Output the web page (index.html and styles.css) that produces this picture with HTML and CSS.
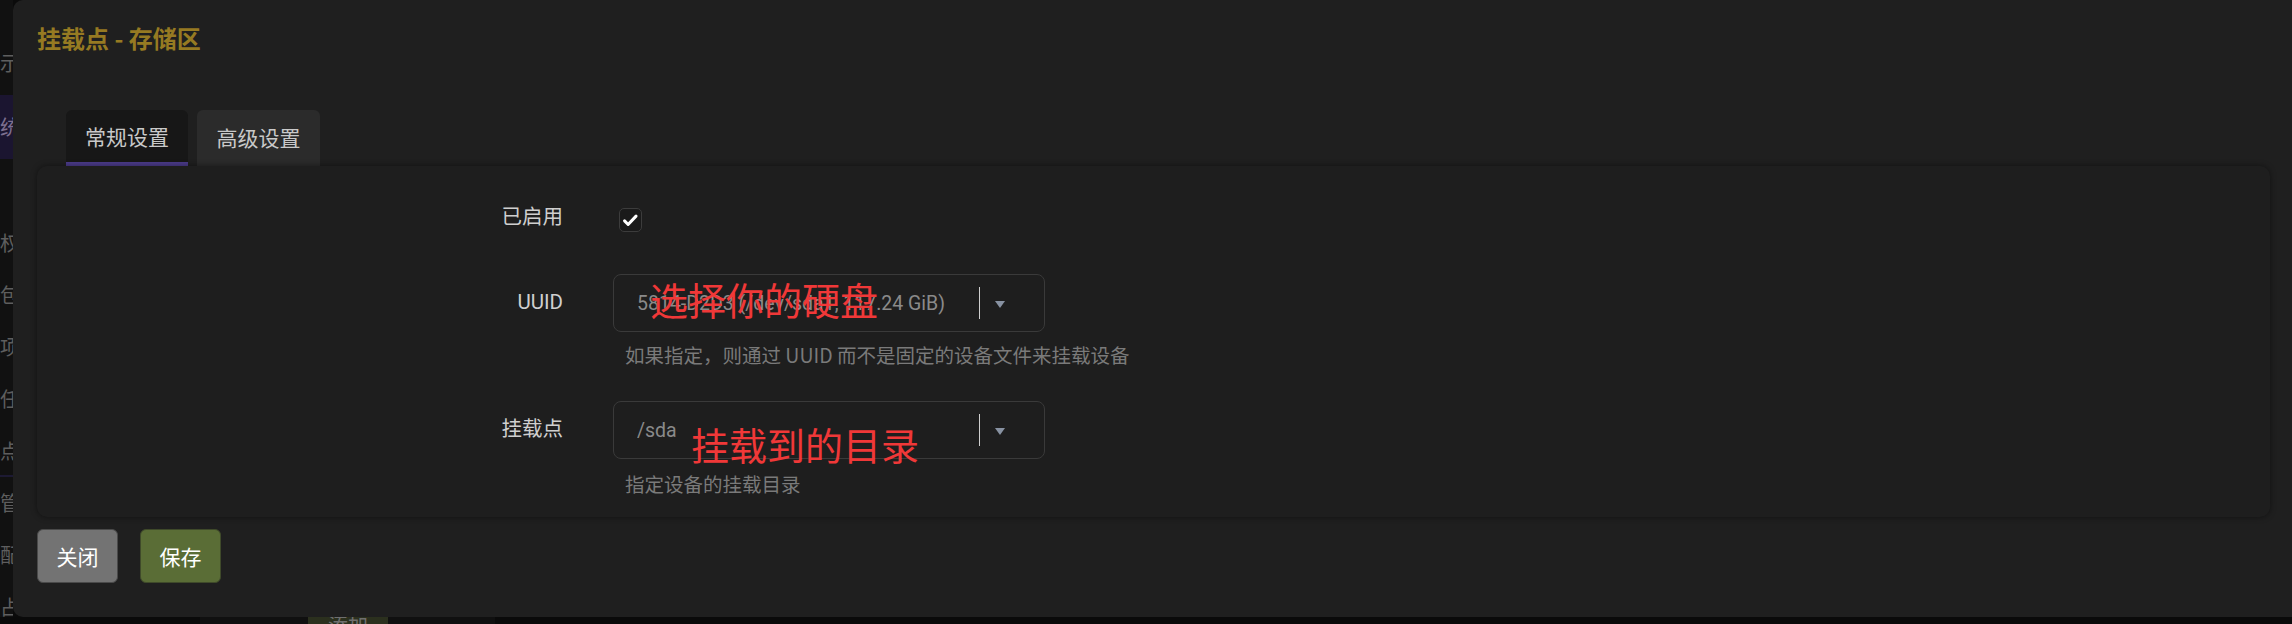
FILE: index.html
```html
<!DOCTYPE html>
<html lang="zh-CN">
<head>
<meta charset="utf-8">
<title>挂载点 - 存储区</title>
<link rel="stylesheet" href="styles.css">
</head>
<body>
<div class="page">
  <div class="main">
    <aside class="sidebar">
      <div class="side-top">示</div>
      <div class="side-active">统</div>
      <ul class="side-list">
        <li>权</li>
        <li>包</li>
        <li>项</li>
        <li>任</li>
        <li class="side-sep">点</li>
        <li>管</li>
        <li>配</li>
        <li>占</li>
      </ul>
    </aside>
    <section class="modal">
      <h2 class="title">挂载点 - 存储区</h2>
      <ul class="tabs">
        <li class="tab tab-active">常规设置</li>
        <li class="tab">高级设置</li>
      </ul>
      <div class="panel">
        <div class="row row-check">
          <label class="label">已启用</label>
          <div class="field">
            <span class="checkbox">
              <svg viewBox="0 0 24 24" width="19" height="19"><path d="M4.5 12.5l4.5 4.5 10-10.5" fill="none" stroke="#ffffff" stroke-width="3.8" stroke-linecap="round" stroke-linejoin="round"/></svg>
            </span>
          </div>
        </div>
        <div class="row row-uuid">
          <label class="label label-select">UUID</label>
          <div class="field">
            <div class="select">
              <span class="value">5814-D2D3 (/dev/sda1, 117.24 GiB)</span>
              <span class="divider"></span>
              <span class="arrow"></span>
            </div>
            <div class="help">如果指定，则通过 UUID 而不是固定的设备文件来挂载设备</div>
            <span class="note note-uuid">选择你的硬盘</span>
          </div>
        </div>
        <div class="row row-mount">
          <label class="label label-select">挂载点</label>
          <div class="field">
            <div class="select">
              <span class="value">/sda</span>
              <span class="divider"></span>
              <span class="arrow"></span>
            </div>
            <div class="help">指定设备的挂载目录</div>
            <span class="note note-mount">挂载到的目录</span>
          </div>
        </div>
      </div>
      <div class="actions">
        <button class="btn btn-close">关闭</button>
        <button class="btn btn-save">保存</button>
      </div>
    </section>
  </div>
  <div class="strip">
    <span class="strip-shade"></span>
    <span class="strip-btn">添加</span>
  </div>
</div>
</body>
</html>
```

FILE: styles.css
```css
* {
  box-sizing: border-box;
}

html, body {
  margin: 0;
  padding: 0;
  background: #0b0b0b;
  overflow: hidden;
}

body {
  width: 2292px;
  height: 624px;
  font-family: Roboto, "Noto Sans CJK SC", sans-serif;
}

.page {
  display: flex;
  flex-direction: column;
  height: 624px;
}

.main {
  display: flex;
  height: 617px;
}

/* background page sidebar, mostly covered by the modal */
.sidebar {
  width: 13px;
  flex: none;
  overflow: hidden;
  background: #111111;
  color: #5e5e5e;
  font-family: "Noto Sans CJK SC", sans-serif;
  font-size: 20px;
  white-space: nowrap;
}

.side-top {
  height: 95px;
  line-height: 20px;
  padding-top: 53px;
}

.side-active {
  height: 64px;
  line-height: 64px;
  background: #1b1530;
  color: #7d6f8f;
}

.side-list {
  list-style: none;
  margin: 0;
  padding: 58px 0 0;
}

.side-list li {
  height: 52px;
  line-height: 52px;
}

.side-sep {
  border-bottom: 2px solid #1d1a33;
}

.modal {
  flex: 1;
  margin-right: -14px;
  background: #1f1f1f;
  border-radius: 10px;
  padding: 22px 36px 0 24px;
  display: flex;
  flex-direction: column;
}

.title {
  margin: 0;
  font-family: "Noto Sans CJK SC", sans-serif;
  font-size: 24px;
  line-height: 32px;
  font-weight: 700;
  color: #967a22;
}

.tabs {
  list-style: none;
  margin: 56px 0 0;
  padding: 0 0 0 29px;
  display: flex;
  gap: 9px;
}

.tab {
  width: 122px;
  height: 56px;
  border-radius: 6px 6px 0 0;
  background: #2b2b2b;
  color: #c9c9c9;
  font-family: "Noto Sans CJK SC", sans-serif;
  font-size: 21px;
  display: flex;
  align-items: center;
  justify-content: center;
  padding-bottom: 2px;
}

.tab-active {
  background: #171717;
  border-bottom: 4px solid #4b3b8a;
  padding-bottom: 0;
}

.tab + .tab {
  width: 123px;
}

.panel {
  position: relative;
  height: 351px;
  background: #1e1e1e;
  border-radius: 10px;
  box-shadow: 0 0 6px rgba(0, 0, 0, 0.45);
  padding-top: 30px;
}

.row {
  display: flex;
  align-items: flex-start;
  gap: 50px;
}

.label {
  width: 526px;
  flex: none;
  text-align: right;
  color: #cfcfcf;
  font-size: 20.5px;
  font-family: Roboto, "Noto Sans CJK SC", sans-serif;
}

.row-check .label {
  line-height: 42px;
}

.row-check {
  height: 48px;
}

.checkbox {
  margin: 12px 0 0 6px;
  width: 23px;
  height: 24px;
  border: 1px solid #3c3c3c;
  border-radius: 5px;
  background: #1a1a1a;
  display: flex;
  align-items: center;
  justify-content: center;
}

.field {
  position: relative;
}

.row-uuid {
  margin-top: 30px;
}

.row-mount {
  margin-top: 31px;
}

.label-select {
  line-height: 56px;
}

.select {
  width: 432px;
  height: 58px;
  border: 1px solid #3a3a3a;
  border-radius: 8px;
  background: #1e1e1e;
  display: flex;
  align-items: center;
  padding: 0 39px 0 23px;
}

.value {
  flex: 1;
  color: #8a8a8a;
  font-size: 19.5px;
  white-space: nowrap;
  overflow: hidden;
}

.divider {
  width: 1px;
  height: 32px;
  background: #cfcfcf;
  margin-right: 15px;
}

.arrow {
  width: 0;
  height: 0;
  border-left: 5px solid transparent;
  border-right: 5px solid transparent;
  border-top: 7px solid #8892a2;
  margin-top: 2px;
}

.help {
  margin-top: 8px;
  margin-left: 12px;
  line-height: 30px;
  font-size: 19.5px;
  color: #7a7a7a;
  font-family: "Noto Sans CJK SC", Roboto, sans-serif;
}

.row-mount .help {
  margin-top: 10px;
}

.note {
  position: absolute;
  font-family: "Noto Sans CJK SC", sans-serif;
  font-size: 38px;
  line-height: 44px;
  color: #f03838;
  white-space: nowrap;
}

.note-uuid {
  left: 37px;
  top: 3px;
}

.note-mount {
  left: 78px;
  top: 21px;
}

.actions {
  display: flex;
  gap: 22px;
  margin-top: 12px;
  padding-left: 0;
}

.btn {
  width: 81px;
  height: 54px;
  border-radius: 6px;
  border: 1px solid #4a4a4a;
  color: #ffffff;
  font-family: "Noto Sans CJK SC", sans-serif;
  font-size: 21px;
  padding: 0;
  display: flex;
  align-items: center;
  justify-content: center;
}

.btn-close {
  background: #737373;
}

.btn-save {
  background: #5a6d36;
  border-color: #3f4a2a;
}

.strip {
  height: 7px;
  overflow: hidden;
  display: flex;
  background: #0a0a0a;
}

.strip-shade {
  width: 295px;
  margin-left: 200px;
  background: #101010;
  flex: none;
  height: 7px;
}

.strip-btn {
  margin-left: -187px;
  width: 80px;
  height: 30px;
  background: #2b301e;
  color: #6f6f6f;
  font-family: "Noto Sans CJK SC", sans-serif;
  font-size: 20px;
  line-height: 20px;
  text-align: center;
  margin-top: -2px;
  flex: none;
}
```
